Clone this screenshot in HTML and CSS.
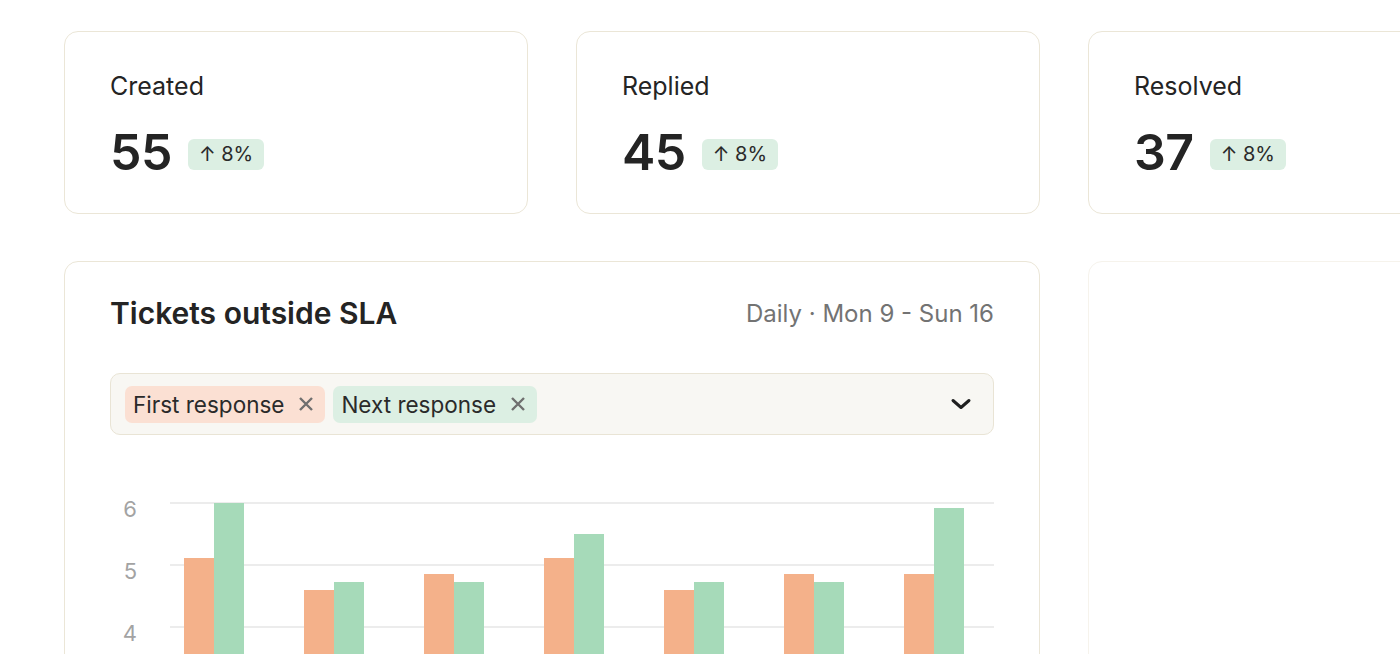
FILE: index.html
```html
<!DOCTYPE html>
<html lang="en">
<head>
  <meta charset="UTF-8" />
  <meta name="viewport" content="width=device-width, initial-scale=1.0" />
  <title>Support overview</title>
  <link rel="stylesheet" href="styles.css">
</head>
<body>
  <div class="dashboard">

    <!-- stat cards -->
    <div class="card stat-card">
      <div class="stat-label">Created</div>
      <div class="stat-row">
        <span class="stat-value">55</span>
        <span class="trend">↑ 8%</span>
      </div>
    </div>
    <div class="card stat-card">
      <div class="stat-label">Replied</div>
      <div class="stat-row">
        <span class="stat-value">45</span>
        <span class="trend">↑ 8%</span>
      </div>
    </div>
    <div class="card stat-card">
      <div class="stat-label">Resolved</div>
      <div class="stat-row">
        <span class="stat-value">37</span>
        <span class="trend">↑ 8%</span>
      </div>
    </div>

    <!-- chart -->
    <div class="card chart-card">
      <div class="chart-head">
        <h3 class="chart-title">Tickets outside SLA</h3>
        <span class="chart-range">Daily · Mon 9 - Sun 16</span>
      </div>

      <div class="picker">
        <span class="tag tag-first">First response
          <svg class="tag-x" width="16" height="16" viewBox="0 0 16 16"><path d="M2 2 L14 14 M14 2 L2 14"/></svg>
        </span>
        <span class="tag tag-next">Next response
          <svg class="tag-x" width="16" height="16" viewBox="0 0 16 16"><path d="M2 2 L14 14 M14 2 L2 14"/></svg>
        </span>
        <svg class="chevron" width="22" height="14" viewBox="0 0 22 14">
          <path d="M3 3.5 L11 10.5 L19 3.5" fill="none" stroke="#1f1f1f" stroke-width="3" stroke-linecap="round" stroke-linejoin="round"/>
        </svg>
      </div>

      <svg class="chart" width="884" height="260" viewBox="0 0 884 260">
        <g class="grid-lines">
          <line x1="60" y1="33" x2="884" y2="33"/>
          <line x1="60" y1="95" x2="884" y2="95"/>
          <line x1="60" y1="157" x2="884" y2="157"/>
          <line x1="60" y1="219" x2="884" y2="219"/>
        </g>
        <g class="axis">
          <text x="27" y="47">6</text>
          <text x="27" y="109">5</text>
          <text x="27" y="171">4</text>
          <text x="27" y="233">3</text>
        </g>
        <g class="bars-first">
          <rect x="74" y="88" width="30" height="200"/>
          <rect x="194" y="120" width="30" height="200"/>
          <rect x="314" y="104" width="30" height="200"/>
          <rect x="434" y="88" width="30" height="200"/>
          <rect x="554" y="120" width="30" height="200"/>
          <rect x="674" y="104" width="30" height="200"/>
          <rect x="794" y="104" width="30" height="200"/>
        </g>
        <g class="bars-next">
          <rect x="104" y="33" width="30" height="250"/>
          <rect x="224" y="112" width="30" height="200"/>
          <rect x="344" y="112" width="30" height="200"/>
          <rect x="464" y="64" width="30" height="220"/>
          <rect x="584" y="112" width="30" height="200"/>
          <rect x="704" y="112" width="30" height="200"/>
          <rect x="824" y="38" width="30" height="250"/>
        </g>
      </svg>
    </div>

    <div class="card side-card"></div>
  </div>
</body>
</html>
```

FILE: styles.css
```css
html, body {
  margin: 0;
  background: #fff;
  overflow: hidden;
}
body {
  font-family: 'Inter', 'Noto Sans', sans-serif;
  color: #242424;
  padding: 31px 0 0 64px;
}
.dashboard {
  display: grid;
  grid-template-columns: repeat(3, 464px);
  column-gap: 48px;
  row-gap: 47px;
}
.card {
  background: #fff;
  border: 1.5px solid #ebe6d7;
  border-radius: 14px;
  box-sizing: border-box;
}
.stat-card {
  height: 183px;
  padding: 39px 45px 0;
}
.stat-label {
  font-size: 25px;
  line-height: 30px;
}
.stat-row {
  display: flex;
  align-items: center;
  gap: 16px;
  margin-top: 23px;
}
.stat-value {
  font-size: 50px;
  line-height: 56px;
  font-weight: 600;
  letter-spacing: -0.5px;
}
.trend {
  margin-top: 4px;
  background: #dcefe3;
  border-radius: 6px;
  font-size: 20px;
  line-height: 31px;
  padding: 0 11px;
  color: #2a2a2a;
}
.chart-card {
  grid-column: span 2;
  height: 460px;
  padding: 34px 45px 0;
}
.chart-head {
  display: flex;
  justify-content: space-between;
  align-items: center;
  height: 34px;
}
.chart-title {
  margin: 0;
  font-size: 30px;
  line-height: 34px;
  font-weight: 600;
}
.chart-range {
  font-size: 24px;
  color: #737373;
}
.picker {
  display: flex;
  align-items: center;
  gap: 8px;
  margin-top: 43px;
  height: 62px;
  box-sizing: border-box;
  padding: 0 21px 0 14px;
  background: #f8f7f3;
  border: 1.5px solid #e9e4d5;
  border-radius: 10px;
}
.tag {
  display: inline-flex;
  align-items: center;
  gap: 14px;
  height: 37px;
  padding: 0 11px 0 8px;
  border-radius: 7px;
  font-size: 22.5px;
  color: #2a2a2a;
}
.tag-first { background: #fbe0d3; }
.tag-next { background: #dcefe3; }
.tag-x path {
  stroke: #6f6f6f;
  stroke-width: 2.4;
  fill: none;
}
.chevron {
  margin-left: auto;
}
.chart {
  display: block;
  margin-top: 35px;
  overflow: visible;
}
.grid-lines line {
  stroke: #ececec;
  stroke-width: 2;
}
.axis text {
  font-family: 'Inter', sans-serif;
  font-size: 22px;
  fill: #a3a3a3;
  text-anchor: end;
}
.bars-first rect { fill: #f4b18a; }
.bars-next rect { fill: #a6dab9; }
.side-card {
  height: 460px;
  border-color: #f6f3ec;
}
```
